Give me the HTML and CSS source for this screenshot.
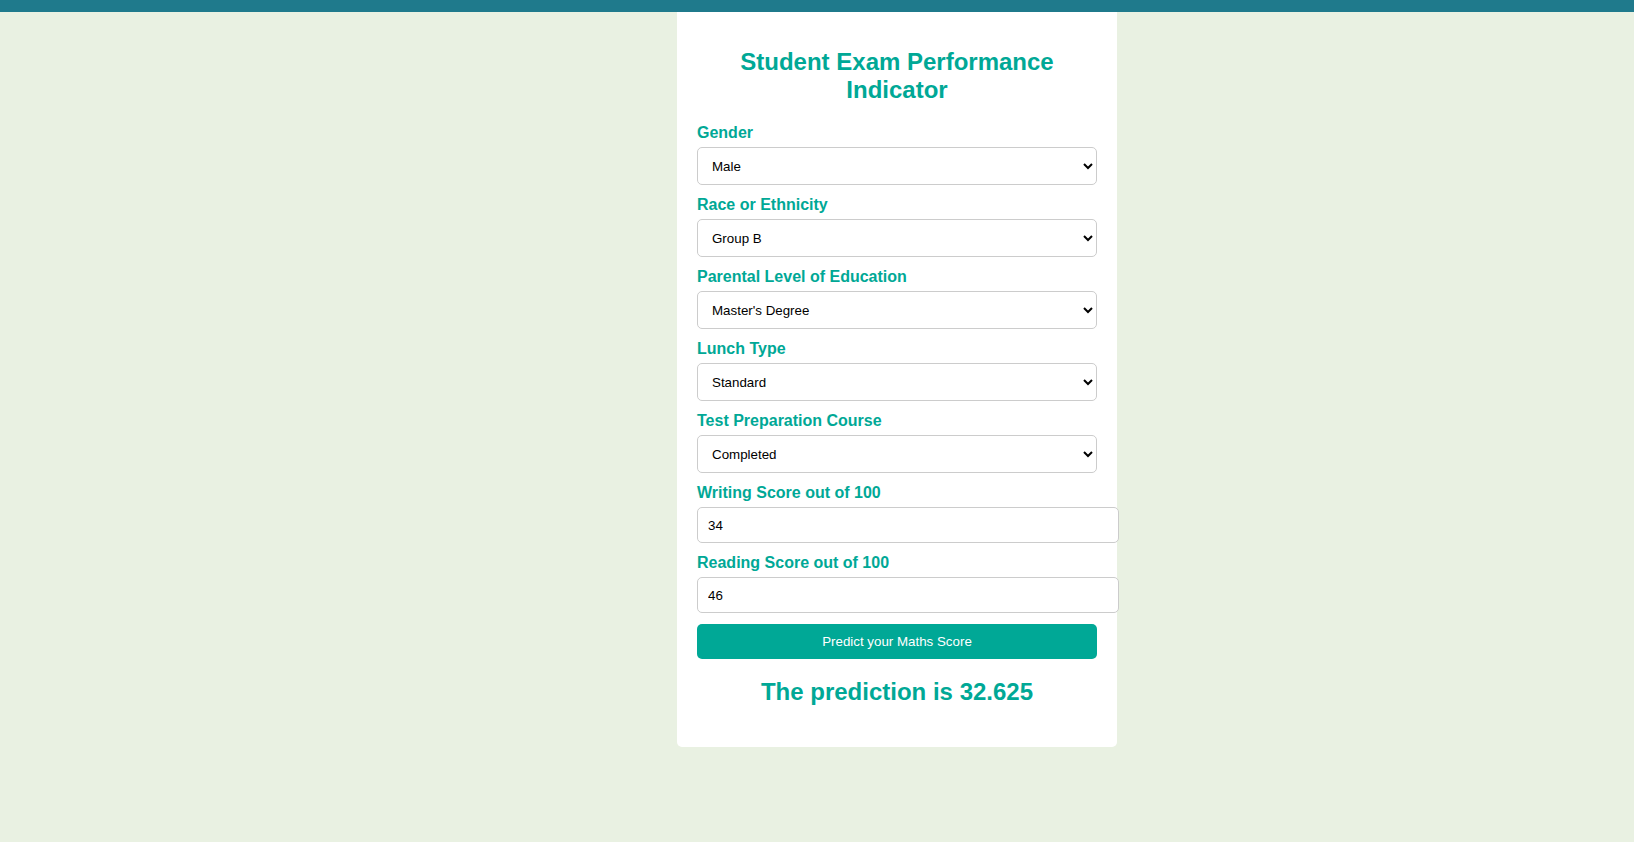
FILE: index.html
```html
<!DOCTYPE html>
<html lang="en">
<head>
<meta charset="utf-8">
<title>Student Exam Performance Indicator</title>
<link rel="stylesheet" href="styles.css">
</head>
<body>
<header class="topbar"></header>
<div class="page">
  <main class="card">
    <h2 class="title">Student Exam Performance Indicator</h2>
    <form class="form">
      <div class="group">
        <label class="label">Gender</label>
        <select class="select">
          <option>Male</option>
          <option>Female</option>
        </select>
      </div>
      <div class="group">
        <label class="label">Race or Ethnicity</label>
        <select class="select">
          <option>Group B</option>
        </select>
      </div>
      <div class="group">
        <label class="label">Parental Level of Education</label>
        <select class="select">
          <option>Master's Degree</option>
        </select>
      </div>
      <div class="group">
        <label class="label">Lunch Type</label>
        <select class="select">
          <option>Standard</option>
        </select>
      </div>
      <div class="group">
        <label class="label">Test Preparation Course</label>
        <select class="select">
          <option>Completed</option>
        </select>
      </div>
      <div class="group">
        <label class="label">Writing Score out of 100</label>
        <input class="input" type="text" value="34">
      </div>
      <div class="group">
        <label class="label">Reading Score out of 100</label>
        <input class="input" type="text" value="46">
      </div>
      <button class="button" type="button">Predict your Maths Score</button>
    </form>
    <h2 class="result">The prediction is 32.625</h2>
  </main>
</div>
</body>
</html>
```

FILE: styles.css
```css
html, body {
  margin: 0;
  padding: 0;
}

body {
  background: #e9f1e2;
  font-family: "Liberation Sans", Arial, sans-serif;
  min-height: 842px;
}

.topbar {
  height: 12px;
  background: #1f7a8c;
}

.page {
  padding-left: 160px;
}

.card {
  width: 400px;
  margin: 0 auto;
  background: #ffffff;
  padding: 16px 20px 21px;
  border-radius: 0 0 5px 5px;
}

.title,
.result {
  margin: 20px 0;
  font-size: 24px;
  font-weight: bold;
  line-height: 27.6px;
  text-align: center;
  color: #00a896;
}

.title {
  margin-bottom: 21px;
}

.result {
  margin-top: 19px;
}

.form {
  margin: 0;
}

.group {
  margin-bottom: 11px;
}

.label {
  display: block;
  margin-bottom: 5px;
  font-size: 16px;
  line-height: 18px;
  font-weight: bold;
  color: #00a896;
}

.select {
  display: block;
  width: 100%;
  height: 38px;
  box-sizing: border-box;
  padding: 0 10px;
  border: 1px solid #cccccc;
  border-radius: 5px;
  background: #ffffff;
  color: #000000;
  font-family: "Liberation Sans", Arial, sans-serif;
  font-size: 13.333px;
}

.input {
  display: block;
  width: calc(100% + 22px);
  height: 36px;
  box-sizing: border-box;
  padding: 0 10px;
  border: 1px solid #cccccc;
  border-radius: 5px;
  background: #ffffff;
  color: #000000;
  font-family: "Liberation Sans", Arial, sans-serif;
  font-size: 13.333px;
}

.button {
  display: block;
  width: 100%;
  height: 35px;
  margin-top: 0;
  border: none;
  border-radius: 5px;
  background: #00a896;
  color: #ffffff;
  font-family: "Liberation Sans", Arial, sans-serif;
  font-size: 13.333px;
  cursor: pointer;
}
```
